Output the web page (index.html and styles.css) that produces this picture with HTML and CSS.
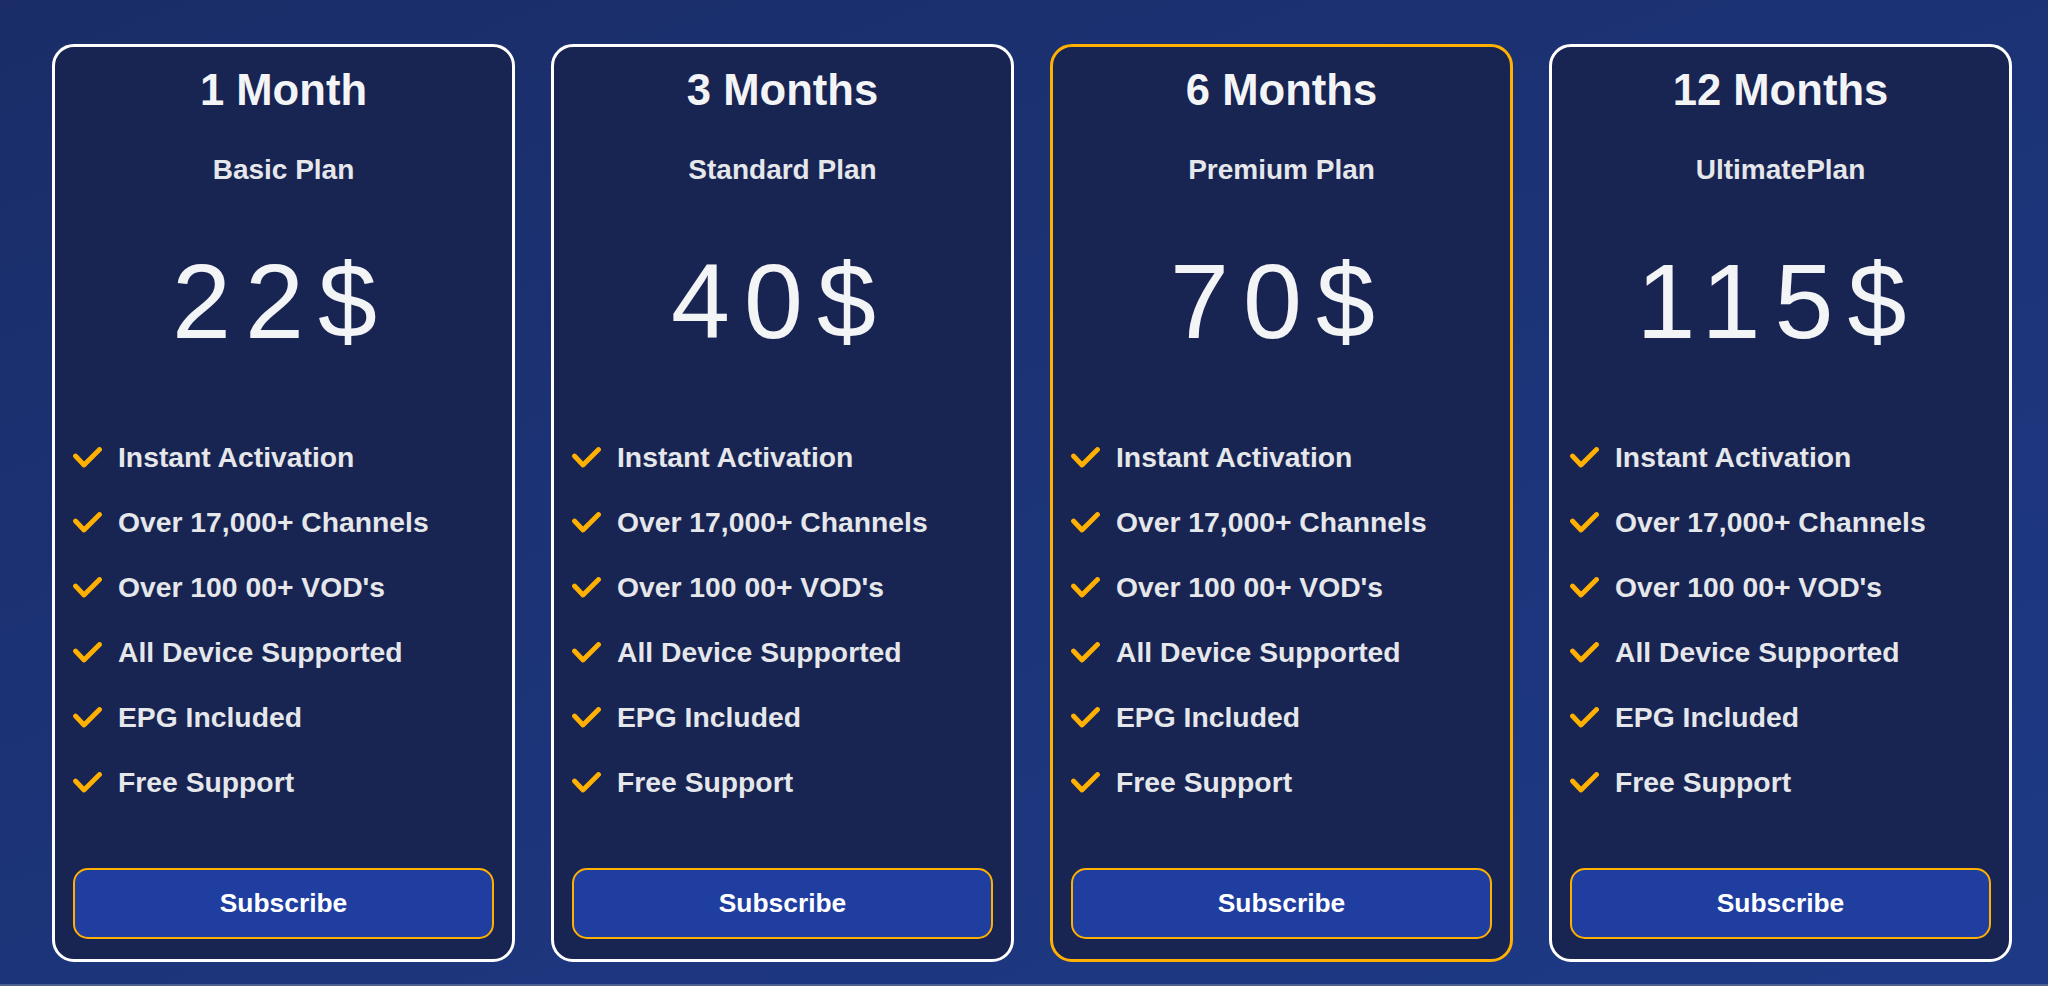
FILE: index.html
```html
<!DOCTYPE html>
<html lang="en">
<head>
<meta charset="utf-8">
<title>Pricing</title>
<link rel="stylesheet" href="styles.css">
</head>
<body>
<main class="pricing">
  <section class="card">
    <h2 class="card-title">1 Month</h2>
    <p class="card-plan">Basic Plan</p>
    <p class="card-price">22$</p>
    <ul class="features">
      <li><svg class="check" viewBox="0 0 29 21"><polyline points="2.5,9 11,18 26.5,2.5"/></svg>Instant Activation</li>
      <li><svg class="check" viewBox="0 0 29 21"><polyline points="2.5,9 11,18 26.5,2.5"/></svg>Over 17,000+ Channels</li>
      <li><svg class="check" viewBox="0 0 29 21"><polyline points="2.5,9 11,18 26.5,2.5"/></svg>Over 100 00+ VOD's</li>
      <li><svg class="check" viewBox="0 0 29 21"><polyline points="2.5,9 11,18 26.5,2.5"/></svg>All Device Supported</li>
      <li><svg class="check" viewBox="0 0 29 21"><polyline points="2.5,9 11,18 26.5,2.5"/></svg>EPG Included</li>
      <li><svg class="check" viewBox="0 0 29 21"><polyline points="2.5,9 11,18 26.5,2.5"/></svg>Free Support</li>
    </ul>
    <button class="subscribe">Subscribe</button>
  </section>
  <section class="card">
    <h2 class="card-title">3 Months</h2>
    <p class="card-plan">Standard Plan</p>
    <p class="card-price">40$</p>
    <ul class="features">
      <li><svg class="check" viewBox="0 0 29 21"><polyline points="2.5,9 11,18 26.5,2.5"/></svg>Instant Activation</li>
      <li><svg class="check" viewBox="0 0 29 21"><polyline points="2.5,9 11,18 26.5,2.5"/></svg>Over 17,000+ Channels</li>
      <li><svg class="check" viewBox="0 0 29 21"><polyline points="2.5,9 11,18 26.5,2.5"/></svg>Over 100 00+ VOD's</li>
      <li><svg class="check" viewBox="0 0 29 21"><polyline points="2.5,9 11,18 26.5,2.5"/></svg>All Device Supported</li>
      <li><svg class="check" viewBox="0 0 29 21"><polyline points="2.5,9 11,18 26.5,2.5"/></svg>EPG Included</li>
      <li><svg class="check" viewBox="0 0 29 21"><polyline points="2.5,9 11,18 26.5,2.5"/></svg>Free Support</li>
    </ul>
    <button class="subscribe">Subscribe</button>
  </section>
  <section class="card card-featured">
    <h2 class="card-title">6 Months</h2>
    <p class="card-plan">Premium Plan</p>
    <p class="card-price">70$</p>
    <ul class="features">
      <li><svg class="check" viewBox="0 0 29 21"><polyline points="2.5,9 11,18 26.5,2.5"/></svg>Instant Activation</li>
      <li><svg class="check" viewBox="0 0 29 21"><polyline points="2.5,9 11,18 26.5,2.5"/></svg>Over 17,000+ Channels</li>
      <li><svg class="check" viewBox="0 0 29 21"><polyline points="2.5,9 11,18 26.5,2.5"/></svg>Over 100 00+ VOD's</li>
      <li><svg class="check" viewBox="0 0 29 21"><polyline points="2.5,9 11,18 26.5,2.5"/></svg>All Device Supported</li>
      <li><svg class="check" viewBox="0 0 29 21"><polyline points="2.5,9 11,18 26.5,2.5"/></svg>EPG Included</li>
      <li><svg class="check" viewBox="0 0 29 21"><polyline points="2.5,9 11,18 26.5,2.5"/></svg>Free Support</li>
    </ul>
    <button class="subscribe">Subscribe</button>
  </section>
  <section class="card">
    <h2 class="card-title">12 Months</h2>
    <p class="card-plan">UltimatePlan</p>
    <p class="card-price">115$</p>
    <ul class="features">
      <li><svg class="check" viewBox="0 0 29 21"><polyline points="2.5,9 11,18 26.5,2.5"/></svg>Instant Activation</li>
      <li><svg class="check" viewBox="0 0 29 21"><polyline points="2.5,9 11,18 26.5,2.5"/></svg>Over 17,000+ Channels</li>
      <li><svg class="check" viewBox="0 0 29 21"><polyline points="2.5,9 11,18 26.5,2.5"/></svg>Over 100 00+ VOD's</li>
      <li><svg class="check" viewBox="0 0 29 21"><polyline points="2.5,9 11,18 26.5,2.5"/></svg>All Device Supported</li>
      <li><svg class="check" viewBox="0 0 29 21"><polyline points="2.5,9 11,18 26.5,2.5"/></svg>EPG Included</li>
      <li><svg class="check" viewBox="0 0 29 21"><polyline points="2.5,9 11,18 26.5,2.5"/></svg>Free Support</li>
    </ul>
    <button class="subscribe">Subscribe</button>
  </section>
</main>
</body>
</html>
```
FILE: styles.css
```css
* { box-sizing: border-box; }

html, body {
  margin: 0;
  padding: 0;
}

body {
  width: 2048px;
  height: 986px;
  overflow: hidden;
  font-family: "Liberation Sans", Arial, Helvetica, sans-serif;
  background: linear-gradient(160deg, #1a2d68 0%, #1c3479 55%, #1e3a86 100%);
  border-bottom: 2px solid #4b5f93;
}

.pricing {
  display: grid;
  grid-template-columns: repeat(4, 1fr);
  gap: 36px;
  height: 984px;
  padding: 44px 36px 22px 52px;
}

.card {
  display: flex;
  flex-direction: column;
  align-items: stretch;
  background: #182452;
  border: 3px solid #ffffff;
  border-radius: 22px;
  padding: 0 18px 20px;
  color: #f3f4f6;
}

.card-featured {
  border-color: #ffb000;
}

.card-title {
  margin: 18px 0 0;
  font-size: 43.6px;
  line-height: 50px;
  font-weight: 700;
  text-align: center;
  color: #f3f4f6;
}

.card-plan {
  margin: 38px 0 0;
  font-size: 28px;
  line-height: 34px;
  font-weight: 700;
  text-align: center;
  color: #e5e7eb;
}

.card-price {
  margin: 61px 0 0;
  font-size: 106px;
  line-height: 106px;
  font-weight: 400;
  letter-spacing: 14px;
  text-indent: -4px;
  text-align: center;
  color: #f3f4f6;
}

.features {
  list-style: none;
  margin: 86px 0 0;
  padding: 0;
  display: flex;
  flex-direction: column;
  gap: 31px;
}

.features li {
  display: flex;
  align-items: center;
  gap: 16px;
  font-size: 28.3px;
  line-height: 34px;
  font-weight: 700;
  color: #e5e7eb;
}

.check {
  width: 29px;
  height: 21px;
  flex: none;
  fill: none;
  stroke: #ffb000;
  stroke-width: 4.8;
  stroke-linecap: round;
  stroke-linejoin: round;
}

.subscribe {
  margin-top: auto;
  height: 71px;
  width: 100%;
  background: #1f3ea0;
  border: 2px solid #ffb000;
  border-radius: 15px;
  color: #ffffff;
  font-family: "Liberation Sans", Arial, Helvetica, sans-serif;
  font-size: 26.4px;
  font-weight: 700;
  cursor: pointer;
}
```
